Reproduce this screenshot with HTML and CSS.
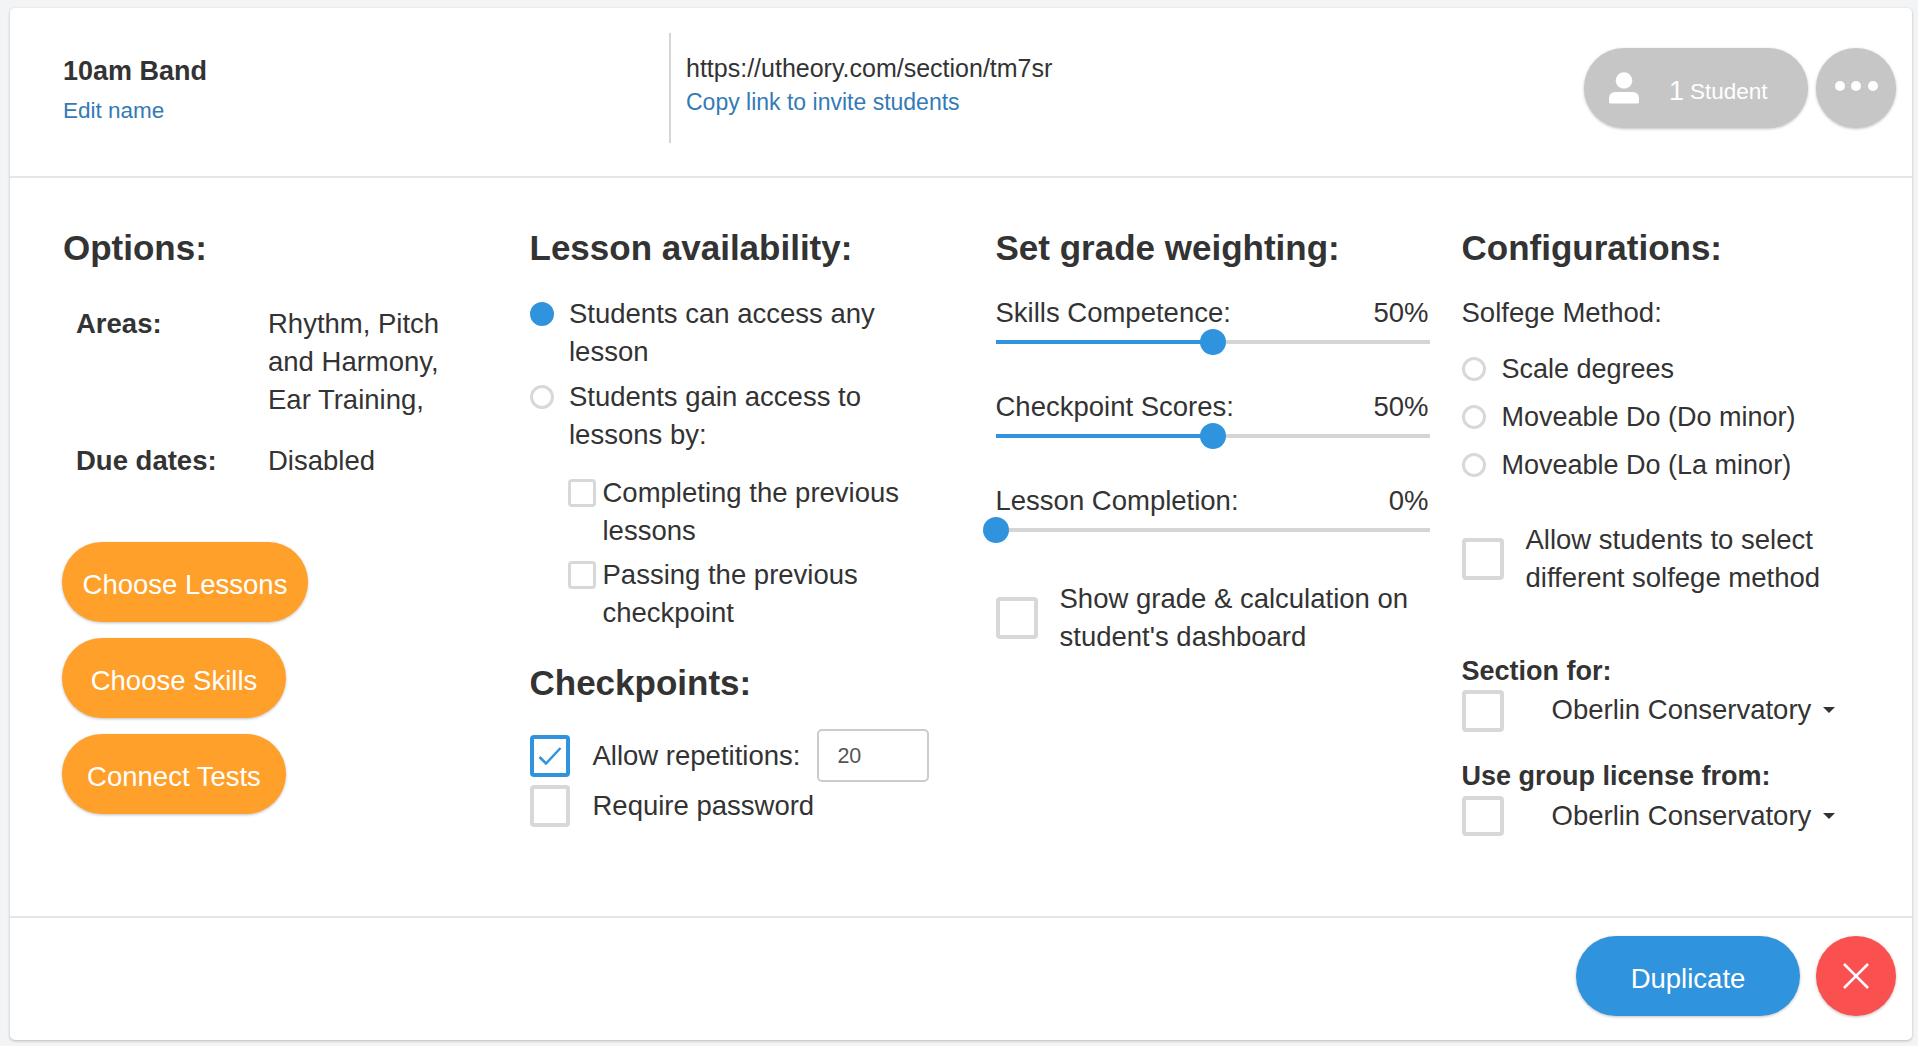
FILE: index.html
```html
<!DOCTYPE html>
<html lang="en">
<head>
<meta charset="utf-8">
<title>10am Band</title>
<link rel="stylesheet" href="styles.css">
</head>
<body>
<main class="card">
  <header class="head">
    <div class="head-name">
      <div class="section-name">10am Band</div>
      <a class="link name-link">Edit name</a>
    </div>
    <div class="head-url">
      <div class="url">https://utheory.com/section/tm7sr</div>
      <a class="link">Copy link to invite students</a>
    </div>
    <div class="head-actions">
      <button class="pill grey students">
        <svg class="person" viewBox="0 0 30 32" width="30" height="32"><circle cx="15" cy="8.500" r="8.300"/><path d="M6 20h18a6 6 0 0 1 6 6v4a1.500 1.500 0 0 1-1.500 1.500h-27A1.500 1.500 0 0 1 0 30v-4a6 6 0 0 1 6-6z"/></svg>
        <span class="count">1</span><span class="count-label">Student</span>
      </button>
      <button class="round grey"><span class="dot"></span><span class="dot"></span><span class="dot"></span></button>
    </div>
  </header>

  <section class="body">
    <div class="col">
      <h2>Options:</h2>
      <dl class="opts">
        <dt>Areas:</dt><dd>Rhythm, Pitch and Harmony, Ear Training,</dd>
        <dt>Due dates:</dt><dd>Disabled</dd>
      </dl>
      <div class="orange-list">
        <button class="pill orange wide">Choose Lessons</button>
        <button class="pill orange">Choose Skills</button>
        <button class="pill orange">Connect Tests</button>
      </div>
    </div>

    <div class="col">
      <h2>Lesson availability:</h2>
      <div class="radio-row first"><span class="radio on"></span><span>Students can access any lesson</span></div>
      <div class="radio-row"><span class="radio"></span><span>Students gain access to lessons by:</span></div>
      <div class="sub-list">
        <div class="sub-row"><span class="box small"></span><span>Completing the previous lessons</span></div>
        <div class="sub-row"><span class="box small"></span><span>Passing the previous checkpoint</span></div>
      </div>
      <h2 class="checkpoints">Checkpoints:</h2>
      <div class="check-row">
        <span class="box narrow on"><svg viewBox="0 0 24 20" width="24" height="20"><path d="M1.500 11l6.500 6.500L22.500 2" fill="none" stroke="#3093dd" stroke-width="2.500"/></svg></span>
        <span class="check-label">Allow repetitions:</span>
        <span class="num">20</span>
      </div>
      <div class="check-row second">
        <span class="box narrow"></span>
        <span class="check-label">Require password</span>
      </div>
    </div>

    <div class="col">
      <h2>Set grade weighting:</h2>
      <div class="slider-list">
        <div class="slider">
          <div class="slider-text"><span>Skills Competence:</span><span>50%</span></div>
          <div class="track"><div class="fill half"></div><span class="thumb at-half"></span></div>
        </div>
        <div class="slider">
          <div class="slider-text"><span>Checkpoint Scores:</span><span>50%</span></div>
          <div class="track"><div class="fill half"></div><span class="thumb at-half"></span></div>
        </div>
        <div class="slider">
          <div class="slider-text"><span>Lesson Completion:</span><span>0%</span></div>
          <div class="track"><span class="thumb at-zero"></span></div>
        </div>
      </div>
      <div class="show-row">
        <span class="box"></span>
        <span>Show grade &amp; calculation on student's dashboard</span>
      </div>
    </div>

    <div class="col">
      <h2>Configurations:</h2>
      <div class="solfege-title">Solfege Method:</div>
      <div class="solfege-list">
        <div class="solfege"><span class="radio"></span><span>Scale degrees</span></div>
        <div class="solfege"><span class="radio"></span><span>Moveable Do (Do minor)</span></div>
        <div class="solfege"><span class="radio"></span><span>Moveable Do (La minor)</span></div>
      </div>
      <div class="allow-row">
        <span class="box"></span>
        <span>Allow students to select different solfege method</span>
      </div>
      <div class="sel-title">Section for:</div>
      <div class="sel-row"><span class="box offset"></span><span class="sel-text">Oberlin Conservatory</span><span class="caret"></span></div>
      <div class="sel-title license">Use group license from:</div>
      <div class="sel-row"><span class="box short"></span><span class="sel-text">Oberlin Conservatory</span><span class="caret"></span></div>
    </div>
  </section>

  <footer class="foot">
    <button class="pill blue">Duplicate</button>
    <button class="round red"><svg viewBox="0 0 28 28" width="28" height="28"><path d="M2 2l24 24M26 2L2 26" stroke="#fff" stroke-width="2.500" fill="none"/></svg></button>
  </footer>
</main>
</body>
</html>
```
FILE: styles.css
```css
* { box-sizing: border-box; }
html, body { margin: 0; height: 100%; }
body {
  background: #f2f4f6;
  padding: 8px 6px 5px 10px;
  font-family: "Liberation Sans", Arial, sans-serif;
  font-size: 27.5px;
  line-height: 38px;
  color: #333;
}
.card {
  width: 1902px;
  height: 1032px;
  background: #fff;
  border-radius: 5px;
  box-shadow: 0 1px 3px rgba(0,0,0,.25);
  display: flex;
  flex-direction: column;
}
.head {
  height: 170px;
  flex: none;
  display: flex;
  align-items: center;
  border-bottom: 2px solid #e6e6e6;
  padding: 0 16px 8px 53px;
}
.head-name { width: 606px; padding-top: 3px; }
.section-name { font-size: 27px; font-weight: 700; line-height: 38px; }
.link { color: #337ab7; font-size: 23px; line-height: 34px; display: block; }
.name-link { margin-top: 4px; font-size: 22.500px; }
.head-url {
  height: 110px;
  border-left: 2px solid #d5d5d5;
  padding: 18px 0 0 15px;
  flex: 1;
}
.url { font-size: 25px; line-height: 34px; }
.head-actions { display: flex; gap: 8px; }

button { font-family: inherit; border: 0; padding: 0; color: #fff; }
.pill {
  height: 80px;
  border-radius: 40px;
  font-size: 27.5px;
  box-shadow: 0 1px 3px rgba(0,0,0,.25);
  display: flex;
  align-items: center;
  justify-content: center;
  padding-top: 5px;
}
.round {
  width: 80px;
  height: 80px;
  border-radius: 50%;
  box-shadow: 0 1px 3px rgba(0,0,0,.25);
  display: flex;
  align-items: center;
  justify-content: center;
}
.grey { background: #c6c6c6; }
.students { width: 224px; justify-content: flex-start; padding: 0 0 0 25px; }
.person { fill: #fff; flex: none; margin-right: 30px; }
.count { font-size: 27px; margin: 6px 6px 0 0; }
.count-label { font-size: 22.500px; margin-top: 8px; }
.dot { width: 10px; height: 10px; background: #fff; border-radius: 50%; margin: 0 3.250px 4px; }

.body {
  flex: 1;
  display: grid;
  grid-template-columns: 466.500px 466px 466px 1fr;
  padding: 0 0 0 53px;
}
h2 { margin: 0; font-size: 35px; line-height: 44px; font-weight: 700; }
.col { padding-top: 48px; }

.opts {
  margin: 35px 0 0;
  display: grid;
  grid-template-columns: 192px 180px;
  padding-left: 13px;
  row-gap: 23px;
}
.opts dt { font-weight: 700; }
.opts dd { margin: 0; }
.orange-list { display: flex; flex-direction: column; align-items: flex-start; gap: 16px; margin: 62px 0 0 -1px; }
.orange { background: #ffa02a; width: 224px; }
.orange.wide { width: 246px; }

.radio-row { display: flex; gap: 15.500px; width: 370px; margin-top: 7px; }
.radio-row.first { margin-top: 25px; }
.radio {
  flex: none;
  width: 24px;
  height: 24px;
  border-radius: 50%;
  border: 3px solid #d8d8d8;
  margin-top: 7px;
  background: #fff;
}
.radio.on { background: #3093dd; border-color: #3093dd; }
.sub-list { margin: 20px 0 0 38px; }
.sub-row { display: flex; gap: 7px; width: 360px; margin-bottom: 6px; }
.box {
  flex: none;
  width: 42px;
  height: 42px;
  border: 4px solid #d8d8d8;
  border-radius: 4px;
  display: flex;
  align-items: center;
  justify-content: center;
}
.box.small { width: 28px; height: 28px; border-width: 3px; margin-top: 5px; }
.box.narrow { width: 40px; }
.box.on { border-color: #3093dd; }
.box.offset { margin-top: 2px; }
.box.short { height: 40px; }
.checkpoints { margin-top: 29px; }
.check-row { display: flex; align-items: center; margin-top: 24px; }
.check-row.second { margin-top: 3px; }
.check-label { margin-left: 23px; }
.num {
  width: 112px;
  height: 53px;
  margin-left: 17px;
  border: 2px solid #ccc;
  border-radius: 5px;
  font-size: 21.500px;
  line-height: 50px;
  padding-left: 18px;
  color: #555;
}

.slider-list { margin-top: 24px; width: 434px; }
.slider { margin-bottom: 44px; }
.slider-text { display: flex; justify-content: space-between; padding-right: 1px; }
.track { position: relative; height: 4px; background: #d5d5d5; margin-top: 8px; }
.fill { height: 100%; background: #3093dd; }
.half { width: 50%; }
.thumb {
  position: absolute;
  top: -11px;
  width: 26px;
  height: 26px;
  border-radius: 50%;
  background: #3093dd;
}
.at-half { left: calc(50% - 13px); }
.at-zero { left: -13px; }
.show-row { display: flex; align-items: center; gap: 22px; width: 440px; margin-top: 48px; }

.solfege-title { margin-top: 24px; }
.solfege-list { margin-top: 18px; }
.solfege { display: flex; gap: 16px; margin-bottom: 10px; font-size: 27px; }
.allow-row { display: flex; align-items: center; gap: 22px; margin-top: 37px; width: 400px; }
.sel-title { font-weight: 700; font-size: 27px; margin-top: 56px; line-height: 36px; }
.sel-title.license { margin-top: 26px; }
.sel-row { display: flex; align-items: center; margin-top: -1px; }
.license + .sel-row { margin-top: 2px; }
.sel-text { margin-left: 48px; }
.caret {
  margin-left: 12px;
  border-top: 6px solid #333;
  border-left: 6px solid transparent;
  border-right: 6px solid transparent;
}

.foot {
  flex: none;
  height: 124px;
  border-top: 2px solid #e6e6e6;
  display: flex;
  justify-content: flex-end;
  align-items: flex-start;
  gap: 16px;
  padding: 18px 16px 0 0;
}
.blue { background: #3093dd; width: 224px; }
.red { background: #fa5050; }
```
